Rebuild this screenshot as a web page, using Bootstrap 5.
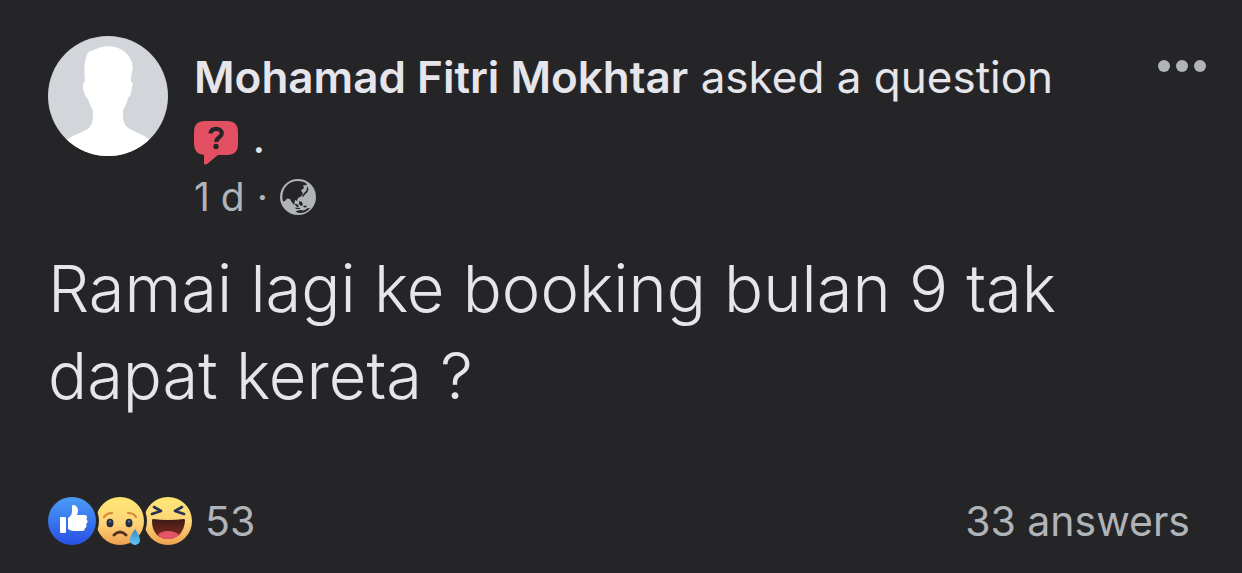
<!DOCTYPE html>
<html lang="ms" data-bs-theme="dark">
<head>
<meta charset="utf-8">
<meta name="viewport" content="width=device-width, initial-scale=1">
<title>Group question</title>
<link href="https://cdn.jsdelivr.net/npm/bootstrap@5.3.0/dist/css/bootstrap.min.css" rel="stylesheet">
<style>
body { background: #252528; color: #e5e5eb; font-family: Inter, "Liberation Sans", sans-serif; }
svg { display: block; flex: none; }
.post { padding: 36px 48px 24px; }
.post-head { gap: 26px; }
.byline { padding-top: 11px; margin-right: 48px; }
.author-line { font-size: 44px; line-height: 60px; font-weight: 400; color: #e5e5eb; }
.author-line a { color: inherit; font-weight: 600; }
.author-line svg { display: inline-block; vertical-align: -12px; margin-right: 2px; }
.meta { font-size: 39px; line-height: 48px; color: #b0b3b8; font-weight: 400; gap: 12px; margin-top: 6px; }
.meta a, .totals a { color: inherit; }
.menu-btn { margin: 20px -16px 0 0; line-height: 1; }
.question { font-size: 65px; line-height: 87px; font-weight: 300; margin-top: 24px; }
.totals { font-size: 41px; line-height: 48px; color: #b0b3b8; margin-top: 78px; font-weight: 400; }
.count { margin-left: 13px; }
</style>
</head>
<body>
<article class="post">
  <header class="post-head d-flex align-items-start">
    <svg width="120" height="120" viewBox="0 0 120 120" role="img" aria-label="Profile picture">
      <defs><clipPath id="face"><circle cx="60" cy="60" r="60"/></clipPath></defs>
      <g clip-path="url(#face)">
        <path fill="#d2d5da" d="M0 0h120v120H0z"/>
        <path fill="#fff" d="M37 46c-1-12-1-23 3-29 2-3 5-2 8-4 10-5 24-3 31 5 5 6 7 12 5 18-1 3-1 7-1 10 2 0 2 1 1 6-1 6-2 9-4 10-1 5-3 9-5 12 0 9 0 13 4 17 5 4 15 7 22 12v17H18v-16c7-5 18-8 23-12 4-4 4-9 4-17-2-4-4-8-5-12-2-1-4-6-5-11 0-5 0-6 2-6z"/>
      </g>
    </svg>
    <div class="byline flex-grow-1">
      <h1 class="author-line mb-0"><a href="#" class="text-decoration-none">Mohamad Fitri Mokhtar</a> asked a question
        <span class="text-nowrap"><svg width="44" height="44" viewBox="0 0 44 44" aria-hidden="true">
          <path fill="#e25062" d="M11 0h22q11 0 11 11v12q0 11-11 11h-9L13 43q-3 2-3-1v-8Q0 33 0 23V11Q0 0 11 0z"/>
          <path fill="none" stroke="#252528" stroke-width="4.200" d="M16.400 12.500c.5-3.100 2.800-4.600 5.800-4.600 3.300 0 5.600 1.700 5.600 4.500 0 4-5.500 3.800-5.500 8.600"/>
          <circle cx="22" cy="25.500" r="2.700" fill="#252528"/>
        </svg> .</span></h1>
      <div class="meta d-flex align-items-center">
        <a href="#" class="text-decoration-none">1 d</a><span>·</span>
        <svg width="36" height="36" viewBox="0 0 36 36" role="img" aria-label="Public">
          <circle cx="18" cy="18" r="18" fill="#b0b3b8"/>
          <path fill="#252528" d="M2.500 20C1.500 12 6 5 12 3c5-2 10-1 14 1l1 2-4 .5 1 2.500-3 2.500 2 3-2 3-3 1.500-1 3-2-1-1 5-3-4-1-2-3-.5-2 2.500-2 .5z"/>
          <path fill="#252528" d="M27 7l1.500 3-1 3-3 3-1.500 2-1-1 2.500-3.500 2-2zM14 24.500l4 1 1 2-2 .5zM19 22l3 1 1 3-2 1-2-2zM23 27l3-.5 1 1.500-3 .5zM15 28.500l5 .5v1h-4zM16 32l4-1 4 .5 4-2.500h2c-2 3-6 5-10 5-2 0-4-1-4-2z"/>
        </svg>
      </div>
    </div>
    <button type="button" class="menu-btn btn border-0 p-1" aria-label="Post options">
      <svg width="48" height="12" viewBox="0 0 48 12" fill="#b0b3b8" aria-hidden="true"><circle cx="6" cy="6" r="6"/><circle cx="24" cy="6" r="6"/><circle cx="42" cy="6" r="6"/></svg>
    </button>
  </header>

  <p class="question mb-0">Ramai lagi ke booking bulan 9 tak dapat kereta ?</p>

  <footer class="totals d-flex align-items-center">
    <svg width="48" height="48" viewBox="0 0 48 48" role="img" aria-label="Like">
      <defs>
        <linearGradient id="blue" x2="0" y2="1"><stop stop-color="#4b9cf5"/><stop offset="1" stop-color="#2850e5"/></linearGradient>
        <linearGradient id="gold" x2="0" y2="1"><stop stop-color="#ffe776"/><stop offset=".55" stop-color="#fdd477"/><stop offset="1" stop-color="#f0a04e"/></linearGradient>
        <linearGradient id="tear" x2="0" y2="1"><stop stop-color="#328acb"/><stop offset="1" stop-color="#62c5fa"/></linearGradient>
        <linearGradient id="mouth" x2="0" y2="1"><stop stop-color="#3e1a18"/><stop offset="1" stop-color="#852d1c"/></linearGradient>
      </defs>
      <circle cx="24" cy="24" r="24" fill="url(#blue)"/>
      <path fill="#fff" d="M13 20h4q1 0 1 1v14q0 1-1 1h-4q-1 0-1-1V21q0-1 1-1zM20 21c3-2 4-4 4-7V9c0-1 1-1 2-1 3 1 4 3 4 6l-1 4h8c2 0 3 3 1 4 2 1 2 4 0 5 1 2 0 4-1 4 0 2-1 3-3 3h-8c-3 0-4-1-6-2z"/>
    </svg>
    <svg width="48" height="48" viewBox="0 0 48 48" role="img" aria-label="Sad">
      <circle cx="24" cy="24" r="24" fill="url(#gold)"/>
      <circle cx="-24" cy="24" r="27" fill="#252528"/>
      <g fill="none" stroke-linecap="round"><path stroke="#d8883c" stroke-width="2.200" d="M8 20q3-4 8-4M32 16q6 0 8 4"/><path stroke="#513022" stroke-width="3" d="M18 38q6-6 12 0"/></g>
      <ellipse cx="14" cy="26" rx="3.500" ry="4.300" fill="#252c43"/><ellipse cx="33" cy="26" rx="3.500" ry="4.300" fill="#252c43"/>
      <circle cx="14" cy="24.500" r="1.300" fill="#5c6b85"/><circle cx="33" cy="24.500" r="1.300" fill="#5c6b85"/>
      <path fill="url(#tear)" d="M39 32c2 3 5 7 5 11a5 5 0 0 1-10 0c0-4 3-8 5-11z"/>
    </svg>
    <svg width="48" height="48" viewBox="0 0 48 48" role="img" aria-label="Haha">
      <circle cx="24" cy="24" r="24" fill="url(#gold)"/>
      <circle cx="-24" cy="24" r="27" fill="#252528"/>
      <path fill="none" stroke="#253452" stroke-width="2.600" stroke-linecap="round" stroke-linejoin="round" d="M10 10l7 4-9 3M38 10l-7 4 9 3"/>
      <path fill="url(#mouth)" d="M9 22q15 2 31 0 1 0 1 2c-1 11-7 18-17 18S8 35 8 24q0-2 1-2z"/>
      <path fill="#e35469" d="M14 38q3-4 10-4t11 4q-4 4-11 4t-10-4z"/>
    </svg>
    <a href="#" class="count text-decoration-none">53</a>
    <a href="#" class="ms-auto me-1 text-decoration-none">33 answers</a>
  </footer>
</article>
<script src="https://cdn.jsdelivr.net/npm/bootstrap@5.3.0/dist/js/bootstrap.bundle.min.js"></script>
</body>
</html>
